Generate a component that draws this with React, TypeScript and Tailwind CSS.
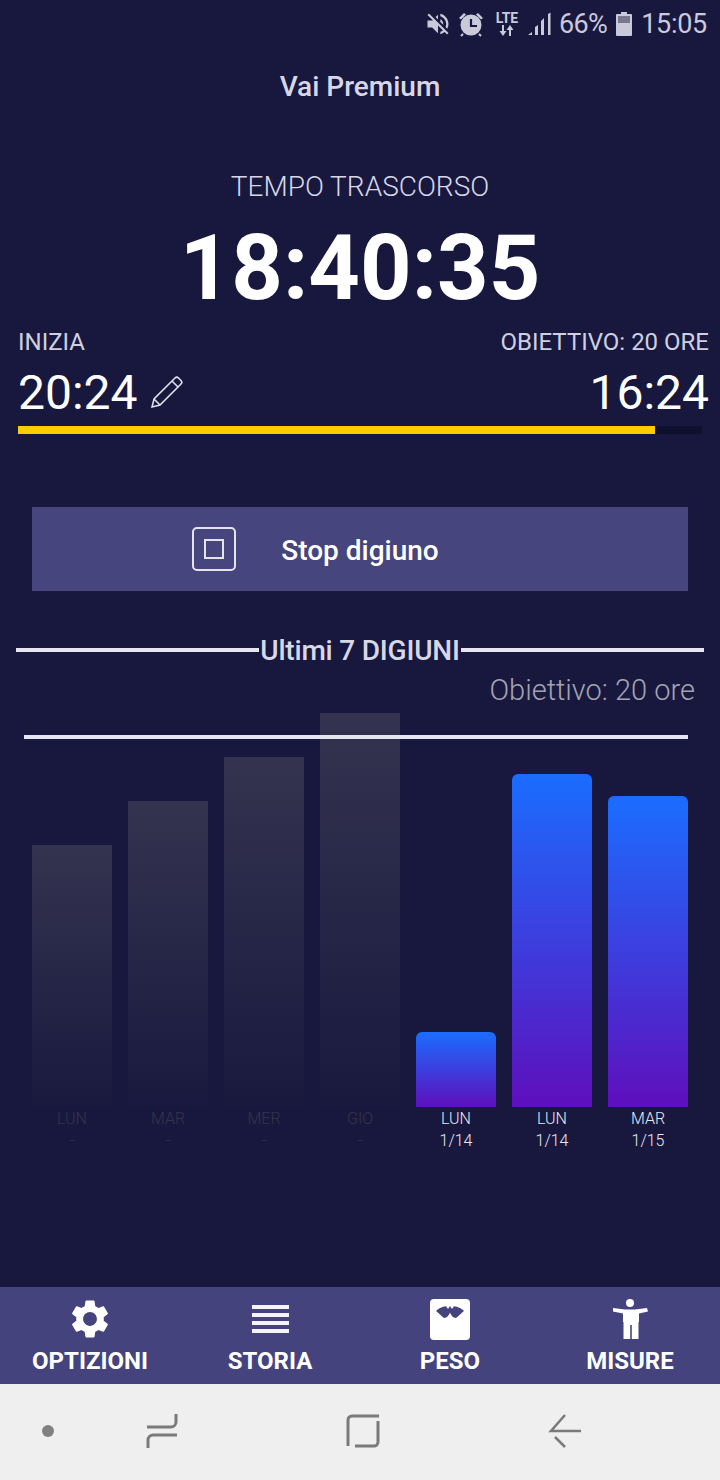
import { MdSettings, MdVolumeOff } from "react-icons/md";

const bars = [
  { day: "LUN", date: "-", height: 262, on: false },
  { day: "MAR", date: "-", height: 306, on: false },
  { day: "MER", date: "-", height: 350, on: false },
  { day: "GIO", date: "-", height: 394, on: false },
  { day: "LUN", date: "1/14", height: 75, on: true },
  { day: "LUN", date: "1/14", height: 333, on: true },
  { day: "MAR", date: "1/15", height: 311, on: true },
];

function StatusBar() {
  return (
    <div className="h-[50px] flex items-center justify-end pr-[13px] pb-[2px] text-[#c9c9da]">
      <MdVolumeOff size={28} className="mr-[6px]" />
      <svg width="26" height="26" viewBox="0 0 26 26" className="mr-[10px]">
        <circle cx="13" cy="14" r="10.500" fill="currentColor" />
        <path d="M1 7l5-5 2 1.500-5 5zM25 7l-5-5-2 1.500 5 5z" fill="currentColor" />
        <path d="M5 23l-2 2M21 23l2 2" stroke="currentColor" strokeWidth="2" />
        <path d="M13 8v7h6" fill="none" stroke="#18183e" strokeWidth="2.200" />
      </svg>
      <div className="flex flex-col items-center w-[26px] mr-[7px]">
        <span className="text-[14px] leading-[13px] font-bold">LTE</span>
        <svg width="16" height="11" viewBox="0 0 16 11" fill="currentColor">
          <path d="M3 0h2v6h2.500L4 11 .5 6H3zM11 0l3.500 5H12v6h-2V5H7.500z" />
        </svg>
      </div>
      <svg width="26" height="26" viewBox="0 0 26 26" className="mr-[6px]" fill="currentColor">
        <path d="M1 24l4-3v3zM8 24v-8l3-2v10zM14 24V10l3-3v17zM21 24V3l2.500-1.500V24z" />
      </svg>
      <span className="text-[27px] leading-none tracking-[-0.6px] mr-[9px]">66%</span>
      <svg width="16" height="24" viewBox="0 0 16 24" className="mr-[9px]" fill="currentColor">
        <path d="M5 0h6v2h4a1 1 0 0 1 1 1v20a1 1 0 0 1-1 1H1a1 1 0 0 1-1-1V3a1 1 0 0 1 1-1h4z" />
        <rect x="2" y="4" width="12" height="7" fill="#77778f" />
      </svg>
      <span className="text-[27px] leading-none tracking-[-0.3px]">15:05</span>
    </div>
  );
}

function Timer() {
  return (
    <div className="flex flex-col items-center">
      <div className="mt-[21px] h-[32px] text-[28px] leading-[32px] font-medium text-[#d7d7e6]">Vai Premium</div>
      <div className="mt-[68px] h-[32px] text-[28px] leading-[32px] font-light text-[#d7d7e6]">TEMPO TRASCORSO</div>
      <div className="mt-[16px] h-[100px] text-[90px] leading-[100px] font-bold text-white">18:40:35</div>
    </div>
  );
}

function FastRange() {
  return (
    <div className="px-[18px] mt-[9px]">
      <div className="flex justify-between items-center h-[28px] text-[24px] leading-[28px] text-[#cfcfe0]">
        <span>INIZIA</span>
        <span className="mr-[-7px]">OBIETTIVO: 20 ORE</span>
      </div>
      <div className="flex justify-between items-center h-[56px] mt-[9px] text-[48px] leading-[56px] text-white">
        <div className="flex items-center">
          <span className="font-normal">20:24</span>
          <svg width="34" height="34" viewBox="0 0 34 34" fill="none" stroke="#e4e4ee" strokeWidth="1.500" className="ml-[12px] mb-[2px]">
            <path d="M2 32l2-8L25 3a2.500 2.500 0 0 1 3.500 0l2.500 2.500a2.500 2.500 0 0 1 0 3.500L10 30zM4 24l6 6M22 6l6 6" />
          </svg>
        </div>
        <span className="mr-[-7px]">16:24</span>
      </div>
      <div className="mt-[5px] h-[8px] w-[684px] bg-[#0f1030]">
        <div className="h-full w-[637px] bg-[#ffcc00]" />
      </div>
    </div>
  );
}

function StopButton() {
  return (
    <div className="mx-[32px] mt-[73px] h-[84px] bg-[#46457e] flex items-center relative justify-center">
      <div className="absolute left-[160px] top-[20px] w-[44px] h-[44px] rounded-[5px] border-2 border-[#e4e4ee] flex items-center justify-center">
        <div className="w-[20px] h-[20px] border-2 border-[#e4e4ee]" />
      </div>
      <span className="text-[28px] font-medium text-white pt-[3px]">Stop digiuno</span>
    </div>
  );
}

function Chart() {
  return (
    <div className="relative">
      <div className="mt-[43px] px-[16px] flex items-center h-[32px]">
        <div className="flex-1 h-[4px] bg-[#e6e6f0]" />
        <span className="text-[28px] leading-[32px] font-medium text-[#d7d7e6] mx-[1px] tracking-[-0.2px] pt-[2px]">Ultimi 7 DIGIUNI</span>
        <div className="flex-1 h-[4px] bg-[#e6e6f0]" />
      </div>
      <div className="h-[32px] mt-[8px] pr-[25px] text-right text-[29px] leading-[32px] font-light text-[#a3a3b1]">Obiettivo: 20 ore</div>
      <div className="px-[32px] mt-[7px]">
        <div className="grid grid-cols-7 gap-x-[16px] h-[394px] items-end relative">
          {bars.map((b, i) => (
            <div
              key={i}
              style={{ height: b.height }}
              className={
                b.on
                  ? "rounded-t-[6px] bg-linear-to-b/srgb from-[#1b6dff] to-[#5e0fbc]"
                  : "bg-linear-to-b/srgb from-[#34334f] to-[#19193f]"
              }
            />
          ))}
          <div className="absolute left-[-8px] right-[0px] top-[22px] h-[4px] bg-[#e6e6f0]" />
        </div>
        <div className="grid grid-cols-7 gap-x-[16px] mt-[1px]">
          {bars.map((b, i) => (
            <div key={i} className={`text-center text-[16px] leading-[22px] font-light ${b.on ? "text-[#e9e9f2]" : "text-[#34344c]"}`}>
              <div>{b.day}</div>
              <div>{b.date}</div>
            </div>
          ))}
        </div>
      </div>
    </div>
  );
}

function NavItem({ label, children }: { label: string; children: React.ReactNode }) {
  return (
    <div className="flex flex-col items-center">
      <div className="h-[44px] flex items-center justify-center text-white">{children}</div>
      <span className="text-[24px] leading-[28px] font-bold text-white mt-[6px]">{label}</span>
    </div>
  );
}

function BottomNav() {
  return (
    <div className="h-[97px] bg-[#45437e] grid grid-cols-4 pt-[10px]">
      <NavItem label="OPTIZIONI">
        <MdSettings size={46} />
      </NavItem>
      <NavItem label="STORIA">
        <div className="w-[37px] flex flex-col gap-[4px]">
          <div className="h-[4px] bg-[#f4f4f9]" />
          <div className="h-[4px] bg-[#f4f4f9]" />
          <div className="h-[4px] bg-[#f4f4f9]" />
          <div className="h-[4px] bg-[#f4f4f9]" />
        </div>
      </NavItem>
      <NavItem label="PESO">
        <svg width="40" height="41" viewBox="0 0 40 41">
          <rect width="40" height="41" rx="4" fill="#fff" />
          <path d="M6 12C9 9 12 7.500 16 7.200L18 10L20 7L22 10L24 7.200C28 7.500 31 9 34 12C31 14 29 17 26 19C23 19 21 16 20 13.500C19 16 17 19 14 19C11 17 9 14 6 12z" fill="#45437e" />
        </svg>
      </NavItem>
      <NavItem label="MISURE">
        <svg width="36" height="42" viewBox="0 0 36 42" fill="#fff">
          <circle cx="18" cy="5" r="4" />
          <path d="M1 10l12 1.500h10L35 10l1 3.500-9 2V24h-.500v17h-6.700V27h-1.600v14H11.500V24H11v-8.500l-10-2z" />
        </svg>
      </NavItem>
    </div>
  );
}

function SystemBar() {
  return (
    <div className="h-[96px] bg-[#efefef] relative">
      <div className="absolute left-[42px] top-[41px] w-[12px] h-[12px] rounded-full bg-[#808080]" />
      <svg width="36" height="38" viewBox="0 0 36 38" fill="none" stroke="#7a7a7a" strokeWidth="3" className="absolute left-[145px] top-[28px]">
        <path d="M2 15H26a5 5 0 0 0 5-5V2M32 23H8a5 5 0 0 0-5 5v8" />
      </svg>
      <svg width="36" height="36" viewBox="0 0 36 36" fill="none" stroke="#7a7a7a" strokeWidth="3" className="absolute left-[346px] top-[29px]">
        <path d="M33 3H6a4 4 0 0 0-4 4v26M32 8v21a4 4 0 0 1-4 4H9" />
      </svg>
      <svg width="36" height="36" viewBox="0 0 36 36" fill="none" stroke="#7a7a7a" strokeWidth="2.500" className="absolute left-[547px] top-[29px]">
        <path d="M34 18H4L18 2M8 24l10 10" />
      </svg>
    </div>
  );
}

export default function App() {
  return (
    <div className="w-[720px] h-[1480px] bg-[#18183e] flex flex-col overflow-hidden font-['Roboto',sans-serif]">
      <StatusBar />
      <Timer />
      <FastRange />
      <StopButton />
      <Chart />
      <div className="flex-1" />
      <BottomNav />
      <SystemBar />
    </div>
  );
}
